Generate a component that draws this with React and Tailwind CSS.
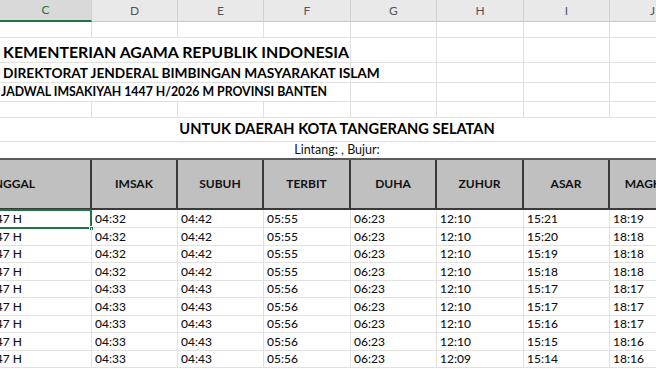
import React from "react";

const LETTERS = ["C", "D", "E", "F", "G", "H", "I", "J"];
const WCLS = ["w-[92px]", "w-[86px]", "w-[86px]", "w-[87px]", "w-[86px]", "w-[87px]", "w-[86px]", "w-[86px]"];

const imsak = ["04:32", "04:32", "04:32", "04:32", "04:33", "04:33", "04:33", "04:33", "04:33"];
const subuh = ["04:42", "04:42", "04:42", "04:42", "04:43", "04:43", "04:43", "04:43", "04:43"];
const terbit = ["05:55", "05:55", "05:55", "05:55", "05:56", "05:56", "05:56", "05:56", "05:56"];
const duha = Array(9).fill("06:23");
const zuhur = ["12:10", "12:10", "12:10", "12:10", "12:10", "12:10", "12:10", "12:10", "12:09"];
const asar = ["15:21", "15:20", "15:19", "15:18", "15:17", "15:17", "15:16", "15:15", "15:14"];
const maghrib = ["18:19", "18:18", "18:18", "18:18", "18:17", "18:17", "18:17", "18:16", "18:16"];
const rowH = ["h-[18px]", "h-[18px]", "h-[17px]", "h-[18px]", "h-[17px]", "h-[18px]", "h-[17px]", "h-[18px]", "h-[17px]"];

const headers = ["TANGGAL", "IMSAK", "SUBUH", "TERBIT", "DUHA", "ZUHUR", "ASAR", "MAGHRIB"];

function GridCells({ from = 0, h }) {
  return (
    <>
      {WCLS.slice(from).map((w, i) => (
        <div key={i} className={`${w} ${h} shrink-0 border-r border-[#e1e1e1]`} />
      ))}
    </>
  );
}

export default function App() {
  return (
    <div className="w-[656px] h-[369px] overflow-hidden bg-white font-['Lato',_'Liberation_Sans',_sans-serif] text-black">
      {/* column headers */}
      <div className="flex h-[22px] bg-[#e9e9e9]">
        {LETTERS.map((l, i) => (
          <div
            key={l}
            className={`${WCLS[i]} shrink-0 flex items-center justify-center text-[12px] border-r border-[#d0d0d0] ${
              i === 0 ? "text-[#217346] border-b-2 border-b-[#217346] bg-[#d9d9d9]" : "text-[#555] border-b border-b-[#c8c8c8]"
            }`}
          >
            {l}
          </div>
        ))}
      </div>

      {/* blank row */}
      <div className="flex h-[16px] border-b border-[#e1e1e1]">
        <GridCells h="h-[15px]" />
      </div>

      {/* KEMENTERIAN */}
      <div className="flex h-[25px] border-b border-[#e1e1e1]">
        <div className="w-[351px] shrink-0 border-r border-[#e1e1e1] flex items-end pb-[2px] pl-[3px] whitespace-nowrap text-[15.9px] font-bold leading-none">
          KEMENTERIAN AGAMA REPUBLIK INDONESIA
        </div>
        <GridCells from={4} h="h-[24px]" />
      </div>

      {/* DIREKTORAT */}
      <div className="flex h-[20px] border-b border-[#e1e1e1]">
        <div className="w-[351px] shrink-0 border-r border-[#e1e1e1] flex items-center pl-[3px] whitespace-nowrap text-[13.7px] font-bold leading-none">
          DIREKTORAT JENDERAL BIMBINGAN MASYARAKAT ISLAM
        </div>
        <GridCells from={4} h="h-[19px]" />
      </div>

      {/* JADWAL */}
      <div className="flex h-[19px] border-b border-[#e1e1e1]">
        <div className="w-[351px] shrink-0 border-r border-[#e1e1e1] flex items-center pl-[1px] whitespace-nowrap text-[12.3px] font-bold leading-none">
          JADWAL IMSAKIYAH 1447 H/2026 M PROVINSI BANTEN
        </div>
        <GridCells from={4} h="h-[18px]" />
      </div>

      {/* blank */}
      <div className="flex h-[16px] border-b border-[#e1e1e1]">
        <GridCells h="h-[15px]" />
      </div>

      {/* UNTUK */}
      <div className="flex h-[24px] border-b border-[#e1e1e1] items-center justify-center pl-[18px] whitespace-nowrap text-[14.6px] font-bold leading-none">
        UNTUK DAERAH KOTA TANGERANG SELATAN
      </div>

      {/* Lintang */}
      <div className="flex h-[16px] items-center justify-center pl-[18px] whitespace-nowrap text-[12.5px] leading-none text-[#111]">
        Lintang: , Bujur:
      </div>

      {/* table header */}
      <div className="flex h-[52px] bg-[#c0c0c0] border-t-2 border-t-[#5a5a5a] border-b-2 border-b-[#3a3a3a]">
        {headers.map((t, i) => (
          <div
            key={t}
            className={`${WCLS[i]} shrink-0 overflow-hidden flex items-center whitespace-nowrap text-[12px] font-bold text-[#111] ${
              i === 0 ? "justify-end pr-[55px]" : "justify-center"
            } ${i < 7 ? "border-r-2 border-[#3a3a3a]" : ""}`}
          >
            {t}
          </div>
        ))}
      </div>

      {/* data rows */}
      {rowH.map((h, r) => {
        const vals = [imsak[r], subuh[r], terbit[r], duha[r], zuhur[r], asar[r], maghrib[r]];
        return (
          <div key={r} className={`flex ${h} border-b border-[#e1e1e1] text-[12px] font-medium text-[#111]`}>
            <div className="relative w-[92px] shrink-0 border-r border-[#e1e1e1]">
              <div className="h-full overflow-hidden flex items-center justify-end pr-[69px] whitespace-nowrap">
                1447 H
              </div>
              {r === 0 && (
                <>
                  <div className="absolute left-[-4px] right-[-1px] top-[-1px] bottom-[-2px] border-2 border-[#217346]" />
                  <div className="absolute right-[-3px] bottom-[-4px] w-[5px] h-[5px] bg-[#217346] border border-white" />
                </>
              )}
            </div>
            {vals.map((v, i) => (
              <div
                key={i}
                className={`${WCLS[i + 1]} shrink-0 border-r border-[#e1e1e1] flex items-center pl-[3px] whitespace-nowrap`}
              >
                {v}
              </div>
            ))}
          </div>
        );
      })}
    </div>
  );
}
